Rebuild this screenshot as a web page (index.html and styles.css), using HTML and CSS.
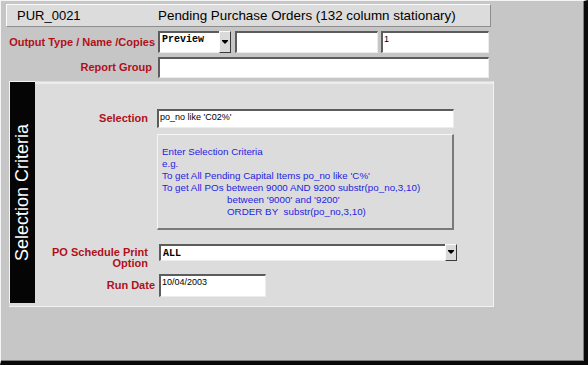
FILE: index.html
```html
<!DOCTYPE html>
<html lang="en">

<head>
    <meta charset="UTF-8">
    <title>PUR_0021</title>
    <link rel="stylesheet" href="styles.css">
</head>

<body>
    <div class="window">
        <div class="header">
            <span class="report-id">PUR_0021</span>
            <span class="report-title">Pending Purchase Orders (132 column stationary)</span>
        </div>

        <div class="row row-output">
            <div class="label">Output Type / Name /Copies</div>
            <div class="select select-type">
                <div class="select-value mono">Preview</div>
                <div class="select-btn"></div>
            </div>
            <div class="input input-name"></div>
            <div class="input input-copies">1</div>
        </div>

        <div class="row row-group">
            <div class="label">Report Group</div>
            <div class="input input-group"></div>
        </div>

        <div class="panel">
            <div class="panel-tab"><span>Selection Criteria</span></div>
            <div class="panel-body">
                <div class="prow prow-selection">
                    <div class="label">Selection</div>
                    <div class="input input-selection">po_no like 'C02%'</div>
                </div>
                <div class="hint">
                    <div>Enter Selection Criteria</div>
                    <div>e.g.</div>
                    <div>To get All Pending Capital Items po_no like 'C%'</div>
                    <div>To get All POs between 9000 AND 9200 substr(po_no,3,10)</div>
                    <div class="indent">between '9000' and '9200'</div>
                    <div class="indent">ORDER BY&nbsp; substr(po_no,3,10)</div>
                </div>
                <div class="prow prow-schedule">
                    <div class="label">PO Schedule Print<br>Option</div>
                    <div class="select select-schedule">
                        <div class="select-value mono">ALL</div>
                        <div class="select-btn"></div>
                    </div>
                </div>
                <div class="prow prow-date">
                    <div class="label">Run Date</div>
                    <div class="input input-date">10/04/2003</div>
                </div>
            </div>
        </div>
    </div>
</body>

</html>
```

FILE: styles.css
```css
* {
    margin: 0;
    padding: 0;
    box-sizing: border-box;
}

body {
    background: #c6c6c6;
    font-family: "Liberation Sans", Arial, sans-serif;
}

.window {
    width: 588px;
    height: 365px;
    background: #c6c6c6;
    border-top: 1px solid #f4f4f4;
    border-left: 1px solid #f4f4f4;
    border-right: 4px solid #0a0a0a;
    border-bottom: 4px solid #0a0a0a;
    box-shadow: inset -1px -1px 0 #7c7c7c;
    padding: 3px 0 0 5px;
}

/* title bar */
.header {
    width: 485px;
    height: 23px;
    display: flex;
    align-items: center;
    background: #dcdcdc;
    border-top: 1px solid #fafafa;
    border-left: 1px solid #fafafa;
    border-right: 1px solid #8e8e8e;
    border-bottom: 1px solid #8e8e8e;
    padding-left: 10px;
    font-size: 13px;
    color: #000;
}

.report-id {
    width: 141px;
}

.report-title {
    font-size: 13.4px;
}

/* form rows */
.row {
    display: flex;
    align-items: center;
}

.label {
    color: #b0101a;
    font-weight: bold;
    font-size: 11px;
    text-align: right;
    line-height: 11px;
}

.row .label {
    width: 149px;
    margin-right: 3px;
}

.row-output {
    margin-top: 4px;
    height: 22px;
}

.row-group {
    margin-top: 4px;
    height: 21px;
}

.row-group .label {
    padding-right: 3px;
}

.input {
    height: 100%;
    background: #fff;
    border-top: 2px solid #5c5c5c;
    border-left: 2px solid #5c5c5c;
    border-right: 1px solid #ececec;
    border-bottom: 1px solid #ececec;
    font-size: 9px;
    color: #000;
    padding: 1px 0 0 1px;
    line-height: 10px;
}

.mono {
    font-family: "Liberation Mono", "Courier New", monospace;
    font-weight: bold;
    font-size: 10px;
}

.select {
    display: flex;
    height: 100%;
}

.select-value {
    flex: 1;
    background: #fff;
    border-top: 2px solid #5c5c5c;
    border-left: 2px solid #5c5c5c;
    border-bottom: 1px solid #ececec;
    padding: 1px 0 0 2px;
    line-height: 11px;
    color: #000;
}

.select-btn {
    width: 12px;
    background: #dadada;
    border-top: 1px solid #fafafa;
    border-left: 1px solid #fafafa;
    border-right: 1px solid #3a3a3a;
    border-bottom: 1px solid #3a3a3a;
    display: flex;
    align-items: center;
    justify-content: center;
}

.select-btn::after {
    content: "";
    border-left: 3px solid transparent;
    border-right: 3px solid transparent;
    border-top: 3px solid #000;
    box-shadow: 0 -1px 0 #000;
}

.select-type {
    width: 73px;
}

.input-name {
    width: 143px;
    margin-left: 4px;
}

.input-copies {
    width: 108px;
    margin-left: 3px;
}

.input-group {
    width: 331px;
}

/* selection criteria panel */
.panel {
    margin: 3px 0 0 3px;
    width: 485px;
    height: 226px;
    display: flex;
    background: #dcdcdc;
    border-right: 1px solid #f2f2f2;
    border-bottom: 1px solid #f2f2f2;
}

.panel-tab {
    width: 26px;
    height: 222px;
    background: #050505;
    border-top: 1px solid #f4f4f4;
    border-left: 1px solid #f4f4f4;
    display: flex;
    align-items: center;
    justify-content: center;
}

.panel-tab span {
    writing-mode: vertical-rl;
    transform: rotate(180deg);
    color: #fff;
    font-size: 18px;
    white-space: nowrap;
}

.panel-body {
    flex: 1;
    padding-top: 28px;
    border-top: 2px solid #ececec;
    margin-top: 1px;
}

.prow {
    display: flex;
    align-items: center;
}

.prow .label {
    width: 113px;
    margin-right: 9px;
}

.prow-selection {
    height: 19px;
    margin-top: -3px;
}

.input-selection {
    width: 297px;
}

.hint {
    margin: 6px 0 0 122px;
    width: 297px;
    height: 96px;
    background: #dcdcdc;
    border-top: 1px solid #f6f6f6;
    border-left: 1px solid #f6f6f6;
    border-right: 2px solid #7a7a7a;
    border-bottom: 2px solid #7a7a7a;
    padding: 11px 0 0 4px;
    color: #2424e0;
    font-size: 9.8px;
    line-height: 12px;
    white-space: nowrap;
}

.hint .indent {
    padding-left: 65px;
}

.prow-schedule {
    margin-top: 14px;
    align-items: flex-start;
}

.prow-schedule .label {
    padding-top: 3px;
}

.select-schedule {
    width: 298px;
    height: 17px;
    margin-left: 2px;
}

.select-schedule .select-value {
    padding-top: 2px;
}

.prow-date {
    margin-top: 5px;
    height: 23px;
}

.prow-date .label {
    width: 120px;
    margin-right: 4px;
}

.input-date {
    width: 107px;
}
```
